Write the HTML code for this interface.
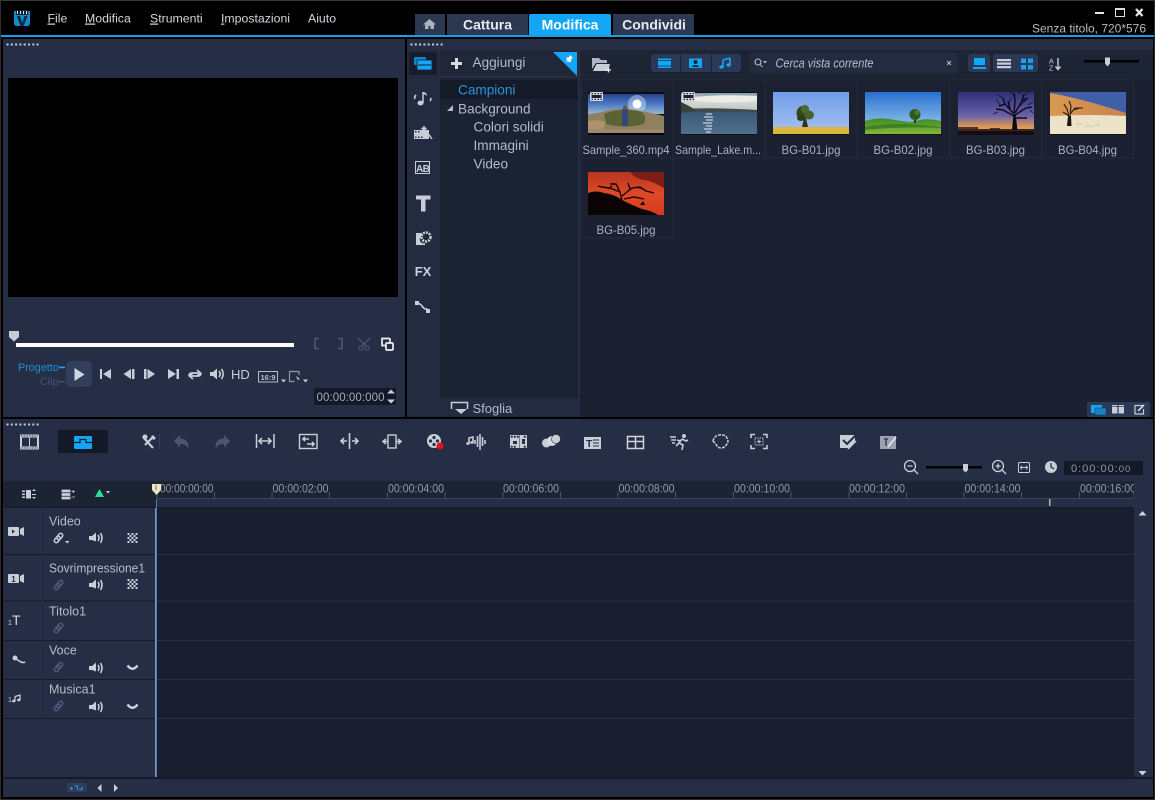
<!DOCTYPE html>
<html lang="it"><head><meta charset="utf-8"><title>VideoStudio</title>
<style>
html,body{margin:0;padding:0;background:#000;width:1155px;height:800px;overflow:hidden}
svg{display:block;filter:blur(.35px)}
text{font-family:"Liberation Sans",sans-serif}
.t{font-size:12px;fill:#aab1c0}
.m{font-size:12.3px;fill:#d2d6de}
.tr{font-size:13.6px;fill:#b3bac8}
.n{font-size:12.5px;fill:#b6bcc9}
.r{font-size:11.6px;fill:#8f97a8}
.tab{font-size:14px;font-weight:bold;fill:#e6e9ef}
.i{fill:#c8cdd8}
.s{fill:none;stroke:#c8cdd8;stroke-width:1.6}
</style></head><body>
<svg width="1155" height="800" viewBox="0 0 1155 800" xmlns="http://www.w3.org/2000/svg">
<defs>
<linearGradient id="sky1" x1="0" y1="0" x2="0" y2="1"><stop offset="0" stop-color="#27418f"/><stop offset=".55" stop-color="#4f7fc8"/><stop offset="1" stop-color="#9cb8d0"/></linearGradient>
<linearGradient id="sky2" x1="0" y1="0" x2="0" y2="1"><stop offset="0" stop-color="#7f9cb0"/><stop offset=".5" stop-color="#d8d8d0"/><stop offset="1" stop-color="#b8c4cc"/></linearGradient>
<linearGradient id="sea" x1="0" y1="0" x2="0" y2="1"><stop offset="0" stop-color="#3b5876"/><stop offset="1" stop-color="#4f7090"/></linearGradient>
<linearGradient id="sky3" x1="0" y1="0" x2="0" y2="1"><stop offset="0" stop-color="#6f9de8"/><stop offset="1" stop-color="#a9c4f0"/></linearGradient>
<linearGradient id="sky4" x1="0" y1="0" x2="0" y2="1"><stop offset="0" stop-color="#2a6fd0"/><stop offset="1" stop-color="#a4d6ee"/></linearGradient>
<linearGradient id="grass" x1="0" y1="0" x2="0" y2="1"><stop offset="0" stop-color="#3d8a28"/><stop offset="1" stop-color="#8cb83c"/></linearGradient>
<linearGradient id="sky5" x1="0" y1="0" x2="0" y2="1"><stop offset="0" stop-color="#2f2f7a"/><stop offset=".55" stop-color="#6a62a8"/><stop offset=".82" stop-color="#e09a50"/><stop offset="1" stop-color="#f0a040"/></linearGradient>
<linearGradient id="sand" x1="0" y1="0" x2="1" y2="0"><stop offset="0" stop-color="#d89a50"/><stop offset="1" stop-color="#c88250"/></linearGradient>
<linearGradient id="red" x1="0" y1="0" x2="0" y2="1"><stop offset="0" stop-color="#b83420"/><stop offset=".5" stop-color="#dd4a26"/><stop offset="1" stop-color="#d83a20"/></linearGradient>
<g id="vol"><path class="i" d="M-7-2h3l4-3.500v9L-4 2h-3z"/><path class="s" stroke-width="1.300" d="M2-3q2 3 0 6M4.500-5q3 5 0 10"/></g>
<g id="lnk" fill="none" stroke-width="1.500"><rect x="-5.500" y="-2" width="7" height="4" rx="2" transform="rotate(-50)"/><rect x="-1.500" y="-2" width="7" height="4" rx="2" transform="rotate(-50)"/></g>
<g id="chk"><path class="i" d="M-5-5h2v2h-2zM-1-5h2v2h-2zM3-5h2v2h-2zM-3-3h2v2h-2zM1-3h2v2h-2zM-5-1h2v2h-2zM-1-1h2v2h-2zM3-1h2v2h-2zM-3 1h2v2h-2zM1 1h2v2h-2zM-5 3h2v2h-2zM-1 3h2v2h-2zM3 3h2v2h-2z"/></g>
<g id="dn"><path fill="none" stroke="#d0d4dc" stroke-width="2.400" d="M-5-2.500Q0 4 5-2.500"/></g>
<g id="grip"><path fill="#c6cbd6" d="M0 0h2v2H0zM4.300 0h2v2h-2zM8.600 0h2v2h-2zM12.900 0h2v2h-2zM17.200 0h2v2h-2zM21.500 0h2v2h-2zM25.800 0h2v2h-2zM30.100 0h2v2h-2z"/></g>
<g id="fs"><rect width="13" height="9" rx="1" fill="#d6d9e0"/><path fill="#1a2130" d="M1.500 1h1.500v1.300H1.500zM4.500 1h1.500v1.300H4.500zM7.500 1h1.500v1.300H7.500zM10.500 1h1.500v1.300h-1.500zM1.500 6.700h1.500V8H1.500zM4.500 6.700h1.500V8H4.500zM7.500 6.700h1.500V8H7.500zM10.500 6.700h1.500V8h-1.500zM1.500 3h10v3h-10z"/></g>
</defs>

<!-- window frame -->
<rect width="1155" height="800" fill="#000"/>
<path d="M0 .5H1155" stroke="#3a3a3a"/>
<path d="M.5 0V800M1154.500 0V800M0 799.500H1155" stroke="#2e2e2e"/>
<rect x="1" y="35" width="1153" height="2" fill="#149fe6"/>

<!-- logo -->
<path d="M14 11h16v12q0 3-3 3H17q-3 0-3-3z" fill="#1689c8"/>
<path d="M17 16h3l2.200 7 2.300-7h3l-4 10h-3z" fill="#0b2a44"/>
<path d="M16 10h12v5H16z" fill="#0b2030"/>
<path fill="#e8edf2" d="M17 11h1v3h-1zM20 11h1v3h-1zM23 11h1v3h-1zM26 11h1v3h-1z"/>

<!-- menu -->
<text class="m" x="47.500" y="22.500"><tspan text-decoration="underline">F</tspan>ile</text>
<text class="m" x="85" y="22.500"><tspan text-decoration="underline">M</tspan>odifica</text>
<text class="m" x="150" y="22.500"><tspan text-decoration="underline">S</tspan>trumenti</text>
<text class="m" x="221" y="22.500"><tspan text-decoration="underline">I</tspan>mpostazioni</text>
<text class="m" x="308" y="22.500">Aiuto</text>

<!-- tabs -->
<rect x="415" y="14" width="30" height="21" fill="#2c3850"/>
<path d="M429.500 19l-6.500 5.500h2v4.500h3.500v-3h2v3h3.500v-4.500h2z" fill="#aab2c0"/>
<rect x="447" y="14" width="81" height="21" fill="#2c3850"/>
<text class="tab" x="487.500" y="29.500" text-anchor="middle">Cattura</text>
<path d="M529 16q0-2 2-2h78q2 0 2 2v19h-82z" fill="#13a6f5"/>
<text class="tab" x="570" y="29.500" text-anchor="middle" style="fill:#fff">Modifica</text>
<rect x="613" y="14" width="81" height="21" fill="#2c3850"/>
<text class="tab" x="654" y="29.500" text-anchor="middle">Condividi</text>

<!-- window buttons -->
<rect x="1095" y="12" width="9" height="2" fill="#e0e3e8"/>
<path d="M1115.500 8.500h9v8h-9z" fill="none" stroke="#d8dbe2"/><rect x="1115" y="8" width="10" height="2" fill="#d8dbe2"/>
<path d="M1136 9l6.500 7M1142.500 9l-6.500 7" stroke="#e8eaee" stroke-width="2.200"/>
<text x="1146" y="32.500" text-anchor="end" textLength="114" lengthAdjust="spacingAndGlyphs" style="font-size:12.200px;fill:#b4b9c4">Senza titolo, 720*576</text>

<!-- player panel -->
<rect x="3" y="39" width="402" height="378" fill="#252e44"/>
<use href="#grip" x="6.500" y="43.500"/>
<rect x="8" y="78" width="390" height="219" fill="#000"/>
<path d="M9 331h10v6l-5 4.500-5-4.500z" fill="#c6cbd6"/>
<rect x="16" y="343" width="278" height="4" fill="#fff"/>
<path d="M319 338.500h-4v10h4M338 338.500h4v10h-4" fill="none" stroke="#4e5a74" stroke-width="1.500"/>
<path d="M358 338l8 8M370 338l-8 8" stroke="#4e5a74" stroke-width="1.200"/><circle cx="361" cy="348" r="2" fill="none" stroke="#4e5a74"/><circle cx="367" cy="348" r="2" fill="none" stroke="#4e5a74"/>
<path d="M382 338.500h7q1 0 1 1v6h-8z" fill="none" stroke="#eef0f4" stroke-width="1.700"/><rect x="386" y="343" width="7" height="7" rx="1" fill="#252e44" stroke="#eef0f4" stroke-width="1.700"/>

<text x="18" y="371" style="font-size:10.800px;fill:#1e8fd8">Progetto</text><rect x="59" y="366.500" width="6" height="1.700" fill="#1ea0ea"/>
<text x="40" y="385" style="font-size:10.800px;fill:#46536e">Clip</text><rect x="59" y="381" width="6" height="1.500" fill="#46536e"/>
<rect x="66" y="361" width="26" height="26" rx="5" fill="#323e5c"/>
<path d="M74.500 368l10 6.500-10 6.500z" fill="#d0d5df"/>
<g class="i">
<path d="M100 369h2v10h-2zM111 369v10l-8-5z"/>
<path d="M132 369h2.500v10H132zM131 369v10l-7.500-5z"/>
<path d="M144 369h2.500v10H144zM147.500 369v10l7.500-5z"/>
<path d="M176.500 369h2.500v10h-2.500zM168 369v10l8-5z"/>
<path d="M210 372h3l4-3.500v11l-4-3.500h-3z"/>
</g>
<path class="s" d="M219 371q2.500 3 0 6M221.500 369q3.500 5 0 10" stroke-width="1.200"/>
<path d="M189 376q0-3 3-3h7M201 373q0 3-3 3h-7M197 370l3.500 3-3.500 3M193 373l-3.500 3 3.500 3" fill="none" stroke="#c8cdd8" stroke-width="1.700"/>
<text x="231" y="379" style="font-size:13px;fill:#c8cdd8">HD</text>
<rect x="258.500" y="371.500" width="19" height="10.500" fill="none" stroke="#b6bcc9"/><text x="268" y="380" text-anchor="middle" style="font-size:7.500px;fill:#b6bcc9;font-weight:bold">16:9</text>
<path d="M281 379.500h5l-2.500 3z" class="i"/>
<path d="M299 375v-3.500h-9.500v10h5" fill="none" stroke="#8f97a8" stroke-width="1.200"/><path d="M296 376l4 3-2 .5 .5 2z" class="i"/>
<path d="M303 379.500h5l-2.500 3z" class="i"/>
<rect x="314" y="388" width="82" height="17" fill="#131927"/>
<text x="316.500" y="401" textLength="68" lengthAdjust="spacing" style="font-size:11.500px;fill:#a2a9b8">00:00:00:000</text>
<path d="M391 389.500l4 4h-8zM391 403.500l-4-4h8z" class="i"/>

<!-- library panel -->
<rect x="407" y="39" width="746" height="378" fill="#252e44"/>
<use href="#grip" x="410.500" y="43.500"/>
<rect x="407" y="50" width="33" height="367" fill="#232b40"/>
<rect x="409" y="52" width="28" height="23" fill="#171d2b"/>
<rect x="440" y="78" width="138" height="339" fill="#1b2231"/>
<rect x="440" y="50" width="138" height="26" fill="#1f2739"/>
<rect x="580" y="50" width="573" height="367" fill="#1b2130"/>
<rect x="580" y="50" width="573" height="30" fill="#1d2434"/>
<!-- sidebar icons -->
<rect x="414" y="57" width="12" height="8" rx="1" fill="#1285c8"/><rect x="417" y="60" width="15" height="10" rx="1" fill="#13a6f5" stroke="#171d2b" stroke-width=".8"/><path d="M418 65h13" stroke="#171d2b"/>
<path d="M423 92v11" stroke="#b8bdc9" stroke-width="1.600"/><path d="M423 92q3 0 4 3l-1 .5q-1-1.500-3-1.500z" class="i"/><ellipse cx="420.500" cy="103" rx="3" ry="2.400" class="i"/>
<path d="M416 95q-2 2-1 4M430 101q1-1 1-3" class="s" stroke-width="1.200"/>
<path d="M414 130h15v9h-15z" class="i"/><path d="M415 131h1.500v1.500H415zM418 131h1.500v1.500H418zM415 136.500h1.500V138H415zM418 136.500h1.500V138H418zM421 136.500h1.500V138H421z" fill="#232b40"/><path d="M424 125l1 2.500 2.500.5-2 1.500.5 2.500-2-1.500-2 1.500.5-2.500-2-1.500 2.500-.5z" class="i"/><path d="M427 132l5 7" stroke="#c8cdd8" stroke-width="1.500"/>
<rect x="415" y="161" width="15" height="13" fill="#c8cdd8"/><rect x="416" y="162" width="13" height="11" fill="#232b40"/><text x="416" y="172" style="font-size:10px;font-weight:bold;fill:#c8cdd8;letter-spacing:-.6px">AB</text>
<path d="M416 195.500h14.500v4h-5v12h-4.500v-12h-5z" fill="#c8cdd8"/>
<path d="M416 233h6v3a3 3 0 0 0 3 7v2h-9z" class="i"/><circle cx="426" cy="237" r="4.500" fill="none" stroke="#c8cdd8" stroke-width="2.500" stroke-dasharray="2 1"/>
<text x="423" y="276" text-anchor="middle" style="font-size:13px;font-weight:bold;fill:#ccd1db">FX</text>
<path d="M416 303q4 0 6 3t4 3 3 2" class="s"/><rect x="415" y="301" width="4" height="4" class="i"/><rect x="426" y="309" width="4" height="4" class="i"/>

<!-- tree -->
<path d="M455 58h3v4h4v3h-4v4h-3v-4h-4v-3h4z" fill="#d8dbe2"/>
<text x="472.500" y="67" class="tr">Aggiungi</text>
<path d="M553 52h24v24z" fill="#13a6f5"/>
<path d="M570 55l3 3-2 1 .5 2-2 1.500-1.500-1.500-2.500 2 1.800-2.800-1.300-1.300 1.800-1.700 1 .3z" fill="#fff"/>
<rect x="440" y="80" width="137" height="19" fill="#151a28"/>
<text x="458" y="94.500" class="tr" style="fill:#2a94d8">Campioni</text>
<path d="M453 105v6h-6z" fill="#b3bac8"/>
<text x="458" y="113.500" class="tr">Background</text>
<text x="473.500" y="131.500" class="tr">Colori solidi</text>
<text x="473.500" y="150" class="tr">Immagini</text>
<text x="473.500" y="168.500" class="tr">Video</text>
<rect x="440" y="398" width="138" height="19" fill="#232b40"/>
<path d="M451.500 409v-6.500h16v6.500" fill="none" stroke="#c8cdd8" stroke-width="1.500"/><path d="M455 409h12l-6 5z" class="i"/>
<text x="472.500" y="413" class="tr" style="font-size:13px">Sfoglia</text>

<!-- library toolbar -->
<path d="M592 58h7l2 2h6v3h-11l-4 6z" fill="#aeb4c2"/><path d="M593 71l3.500-7H610l-2 7z" fill="#c8cdd8"/><path d="M606 70h5M608.500 67.500v5" stroke="#e8eaee" stroke-width="1.300"/>
<rect x="651" y="54" width="90" height="18" rx="4" fill="#2b3856"/>
<path d="M680.500 54v18M711.500 54v18" stroke="#1d2434"/>
<rect x="658" y="58.500" width="13" height="9.500" fill="#13a6f5"/><path d="M658 60.500h13M658 66h13" stroke="#0a4f80"/>
<rect x="689" y="58.500" width="13" height="9.500" fill="#13a6f5"/><circle cx="695.500" cy="62" r="2" fill="#123"/><path d="M691.500 67q4-4 8 0" fill="#123"/>
<path d="M723 60v6.500M730 58v6.500M723 60l7-2" stroke="#13a6f5" stroke-width="1.600" fill="none"/><ellipse cx="721.500" cy="67" rx="2.300" ry="1.800" fill="#13a6f5"/><ellipse cx="728.500" cy="65" rx="2.300" ry="1.800" fill="#13a6f5"/>
<rect x="750" y="53" width="208" height="20" rx="2" fill="#222b3f"/>
<circle cx="758" cy="62" r="3" fill="none" stroke="#b6bcc9" stroke-width="1.100"/><path d="M760 64.500l2.500 2.500" stroke="#b6bcc9"/><path d="M763 61h4l-2 2.500z" fill="#b6bcc9"/>
<text x="775.500" y="67.500" textLength="98" lengthAdjust="spacingAndGlyphs" style="font-size:12.500px;font-style:italic;fill:#b9bfcb">Cerca vista corrente</text>
<path d="M947 61l4 4M951 61l-4 4" stroke="#b0b6c4" stroke-width="1.100"/>
<rect x="968" y="54" width="22" height="18" rx="3" fill="#2b3856"/>
<rect x="974" y="58" width="11" height="7" fill="#13a6f5"/><rect x="973" y="67" width="13" height="2" fill="#13a6f5"/>
<rect x="993" y="54" width="45" height="18" rx="3" fill="#2b3856"/>
<path d="M997 59h14v2.300h-14zM997 62.500h14v2.300h-14zM997 66h14v2.300h-14z" fill="#c8cdd8"/>
<path d="M1021 58.500h5v4.500h-5zM1028 58.500h5v4.500h-5zM1021 65h5v4.500h-5zM1028 65h5v4.500h-5z" fill="#13a6f5"/>
<text x="1049" y="63.500" style="font-size:7px;fill:#c8cdd8">A</text><text x="1049" y="70.500" style="font-size:7px;fill:#c8cdd8">Z</text>
<path d="M1058 58v11M1055.500 66.500l2.500 3 2.500-3" fill="none" stroke="#c8cdd8" stroke-width="1.400"/>
<rect x="1084" y="60" width="55" height="2.500" fill="#000"/><path d="M1105 57.500h5v6l-2.500 3-2.500-3z" fill="#c8cdd8"/>

<!-- thumbnail grid -->
<g stroke="#232b3d" fill="none">
<path d="M581.500 80H1134M581.500 158H1134M581.500 238H673"/>
<path d="M581.500 80V238M673 80V238M765 80V158M857 80V158M949.500 80V158M1041.500 80V158M1133.500 80V158"/>
</g>
<!-- thumb 1 -->
<g>
<rect x="588" y="92" width="76" height="43" fill="#0d0d0d"/>
<rect x="588" y="94" width="76" height="20" fill="url(#sky1)"/>
<circle cx="637" cy="104" r="9" fill="#cfe6ff" opacity=".45"/><circle cx="637" cy="104" r="4.500" fill="#fff"/>
<path d="M588 114q10-1 18-3 14-4 30-1 12 2 28 6v17h-76z" fill="#8f8160"/>
<path d="M604 114q14-6 34-3 10 2 6 13-18 5-38 0z" fill="#5c6234"/>
<path d="M588 121q10-2 18 1l-5 11h-13z" fill="#b0916a"/>
<path d="M588 129h76v4h-76z" fill="#a08870"/>
<rect x="622" y="109" width="6" height="17" fill="#324a78"/><circle cx="625" cy="107.500" r="2" fill="#705040"/>
<rect x="588" y="133" width="76" height="2" fill="#050505"/>
<use href="#fs" x="590" y="92"/>
</g>
<!-- thumb 2 -->
<g>
<rect x="681" y="92" width="76" height="43" fill="#111"/>
<rect x="681" y="93" width="76" height="18" fill="url(#sky2)"/>
<path d="M695 97q25-3 62-1v5q-30 3-62 0z" fill="#ecebe4"/>
<path d="M681 109q30-2 76 1v2h-76z" fill="#404c4c"/>
<rect x="681" y="112" width="76" height="22" fill="url(#sea)"/>
<path d="M681 102l8 4 8 5 -16 2z" fill="#38403c"/>
<g stroke="#dfe8f0" stroke-width="1.200" opacity=".85"><path d="M706 114h6M704 117h9M706 120h7M703 123h9M706 126h6M704 129h8M706 132h5"/></g>
<use href="#fs" x="682" y="92"/>
</g>
<!-- thumb 3 -->
<g>
<rect x="773" y="92" width="76" height="43" fill="url(#sky3)"/>
<rect x="773" y="127" width="76" height="7" fill="#dcb63a"/>
<rect x="773" y="134" width="76" height="1" fill="#111"/>
<path d="M802 127q3 0 6 0l-2-9h-2z" fill="#3a3020"/>
<ellipse cx="803" cy="113" rx="6.500" ry="7" fill="#34481e"/><ellipse cx="809" cy="115" rx="5" ry="4.500" fill="#47622c"/><ellipse cx="805" cy="109" rx="4" ry="4" fill="#4c6a32"/><ellipse cx="801" cy="118" rx="4" ry="3" fill="#2c3e18"/>
</g>
<!-- thumb 4 -->
<g>
<rect x="865" y="92" width="76" height="43" fill="url(#sky4)"/>
<path d="M865 121q12-4 24-2 12 2 22 3 15-5 30-1v14h-76z" fill="url(#grass)"/>
<path d="M865 127q30-6 76 0v1q-40-2-76 2z" fill="#2f7420" opacity=".7"/>
<rect x="914" y="118" width="2" height="5" fill="#3a3018"/>
<circle cx="915" cy="114.500" r="5.500" fill="#2c5a1c"/><circle cx="917" cy="112.500" r="2.500" fill="#487a30"/>
<rect x="865" y="134" width="76" height="1" fill="#111"/>
</g>
<!-- thumb 5 -->
<g>
<rect x="958" y="92" width="76" height="43" fill="url(#sky5)"/>
<rect x="958" y="129" width="76" height="6" fill="#140e14"/>
<path d="M958 130h76" stroke="#6a3a30"/>
<path d="M1012 130l1.500-16 2 0 2 16z" fill="#0c0a14"/>
<path d="M1014 116l-11-6-7-1M1014 114l-9-10-2-6M1014 113l1-12-1-8M1015 113l7-12 2-7M1015 115l11-7 6-1M1015 118l12 0M1005 104l-6 2M1021 102l6-4M1010 109l-2-8" stroke="#100c18" stroke-width="1.500" fill="none"/>
<g stroke="#100c18" stroke-width="1" fill="none" opacity=".7"><path d="M1000 105l-4-6M1003 98l-5-3M1014 95l-4-3M1018 93l3-1M1024 95l5-3M1028 105l5-3M1030 110l3 3M998 112l-5 2M1008 106l3-8M1020 106l8-8"/></g>
<path d="M958 128h20M990 129h10" stroke="#1a1418" stroke-width="1.500"/>
</g>
<!-- thumb 6 -->
<g>
<rect x="1050" y="92" width="76" height="43" fill="#3f60a8"/>
<path d="M1050 93q30 5 76 20v4h-76z" fill="url(#sand)"/>
<path d="M1050 116q40-2 76 0v18h-76z" fill="#ece2c8"/>
<path d="M1067 126l1-10 3 0 .5 10z" fill="#20160e"/>
<path d="M1069 117l-2-8-3-5M1069 116l-6-4M1070 116l1-10-2-5M1070 114l5-6 8 0M1073 110l7-2" stroke="#2a1a0c" stroke-width="1.100" fill="none"/>
<path d="M1076 124h6M1085 126h8M1095 125h5" stroke="#c4bca8" stroke-width=".8"/>
<rect x="1050" y="134" width="76" height="1" fill="#111"/>
</g>
<!-- thumb 7 -->
<g>
<rect x="588" y="172" width="76" height="43" fill="url(#red)"/>
<path d="M630 172h34v16q-14-8-20-8-8-1-14-8z" fill="#7c1e16"/>
<path d="M588 193q8-3 16 0 10 1 20 8 10 5 18 8 10 2 16 6H588z" fill="#0a0405"/>
<path d="M622 200l-2-8-10-4-8-1M620 192l-4-8-6 0M622 196l10-8 8-1 6 4 8 2M630 189l-2-6M636 187l8 2M612 186l-4 3M602 187l-4-1M624 199l10-2 10 2" stroke="#170606" stroke-width="1.400" fill="none"/>
<path d="M640 205l3-4 2 4" fill="#0a0405"/>
</g>
<g class="t" text-anchor="middle">
<text x="626" y="154" textLength="87" lengthAdjust="spacingAndGlyphs">Sample_360.mp4</text>
<text x="718" y="154" textLength="86" lengthAdjust="spacingAndGlyphs">Sample_Lake.m...</text>
<text x="811" y="154" textLength="59" lengthAdjust="spacingAndGlyphs">BG-B01.jpg</text>
<text x="903" y="154" textLength="59" lengthAdjust="spacingAndGlyphs">BG-B02.jpg</text>
<text x="995.500" y="154" textLength="59" lengthAdjust="spacingAndGlyphs">BG-B03.jpg</text>
<text x="1087.500" y="154" textLength="59" lengthAdjust="spacingAndGlyphs">BG-B04.jpg</text>
<text x="626" y="234" textLength="59" lengthAdjust="spacingAndGlyphs">BG-B05.jpg</text>
</g>
<!-- library bottom-right -->
<rect x="1087" y="402" width="63" height="15" rx="2" fill="#2b3856"/>
<rect x="1091" y="405" width="11" height="8" fill="#13a6f5"/><rect x="1095" y="408" width="11" height="7" fill="#1285c8" stroke="#2b3856" stroke-width=".6"/>
<rect x="1112" y="405" width="12" height="8.500" fill="#c8cdd8"/><path d="M1118 405v8.500" stroke="#2b3856" stroke-width="1.200"/><path d="M1112 406.500h12" stroke="#2b3856" stroke-width=".7"/>
<path d="M1143 405.500h-8v8.500h8.500v-5" fill="none" stroke="#c8cdd8" stroke-width="1.200"/><path d="M1138 411l6-6" stroke="#e4e7ec" stroke-width="1.500"/>

<!-- timeline panel -->
<rect x="3" y="419" width="1150" height="378" fill="#252e44"/>
<use href="#grip" x="6.500" y="423.500"/>
<!-- toolbar -->
<g>
<rect x="20" y="434.500" width="19" height="15" fill="#c8cdd8"/><rect x="22" y="437.500" width="7" height="9" fill="#252e44"/><rect x="30" y="437.500" width="7" height="9" fill="#252e44"/><path d="M21 436h17M21 448h17" stroke="#252e44" stroke-dasharray="1.500 1.200"/>
<rect x="58" y="430" width="50" height="23" fill="#131927"/>
<rect x="74" y="436" width="18" height="13" rx="1" fill="#13a6f5"/><path d="M74 442.500h6v-3h6v3h6" stroke="#131927" stroke-width="1.300" fill="none"/>
<path d="M143 437l10 11M154 436l-9 9" stroke="#c8cdd8" stroke-width="2.200"/><circle cx="145" cy="437" r="2.500" class="i"/><path d="M152 435l4 3-2 2-3-2z" class="i"/><path d="M159.500 434v15" stroke="#33405c"/>
<path d="M174 441l6-6v3.500q9 0 8.500 10-2.500-5-8.500-4.500v3.500z" fill="#485672"/>
<path d="M230 441l-6-6v3.500q-9 0-8.500 10 2.500-5 8.500-4.500v3.500z" fill="#485672"/>
<path d="M256.500 434v14M274 434v14" stroke="#c8cdd8" stroke-width="1.500"/><path d="M259 441h12M262 438l-3 3 3 3M268 438l3 3-3 3" class="s" stroke-width="1.400"/>
<rect x="299.500" y="434.500" width="17.500" height="14" fill="none" stroke="#c8cdd8" stroke-width="1.400"/><path d="M303 439h6M305 437l-2 2 2 2M307 444h7M312 442l2 2-2 2" class="s" stroke-width="1"/>
<path d="M349.500 433v16M347 441h-6M344 438l-3 3 3 3M352 441h6M355 438l3 3-3 3" class="s" stroke-width="1.500"/>
<rect x="388" y="435" width="8" height="13" fill="none" stroke="#c8cdd8" stroke-width="1.400"/><path d="M388 441.500h-5M386 439l-3 2.500 3 2.500M396 441.500h5M398 439l3 2.500-3 2.500" class="s" stroke-width="1.300"/>
<circle cx="434" cy="441" r="7" class="i"/><circle cx="434" cy="437.500" r="1.600" fill="#252e44"/><circle cx="430.500" cy="441" r="1.600" fill="#252e44"/><circle cx="437.500" cy="441" r="1.600" fill="#252e44"/><circle cx="434" cy="444.500" r="1.600" fill="#252e44"/><circle cx="440" cy="446" r="3.500" fill="#e0101c"/>
<path d="M469 443v-5l4-1v5M475 440v4M477.500 436v11M480 434v16M482.500 437v9M485 440v4" class="s" stroke-width="1.300"/><ellipse cx="468" cy="443.500" rx="1.800" ry="1.400" class="i"/><ellipse cx="472" cy="442.500" rx="1.800" ry="1.400" class="i"/>
<rect x="510" y="435" width="17" height="13" class="i"/><path d="M511 436h1.500v1.500H511zM514 436h1.500v1.500H514zM517 436h1.500v1.500H517zM524 436h1.500v1.500H524zM511 446h1.500v1.500H511zM514 446h1.500v1.500H514zM524 446h1.500v1.500H524zM519.500 435v13" fill="#252e44" stroke="#252e44" stroke-width=".5"/><path d="M513 441h4v3h-4zM522 439h3v5h-3z" fill="#252e44"/>
<circle cx="546.500" cy="443" r="4.500" class="i"/><circle cx="552" cy="441" r="5" fill="#d8dbe2"/><circle cx="556" cy="439" r="4.500" class="i" stroke="#252e44" stroke-width=".6"/>
<rect x="584" y="437" width="17" height="12" class="i"/><text x="586" y="447" style="font-size:10.500px;font-weight:bold;fill:#252e44">T</text><path d="M593 440h6M593 443h6M593 446h6" stroke="#252e44"/>
<rect x="627.500" y="436.500" width="16" height="12" fill="none" stroke="#d0d4dc" stroke-width="1.500"/><path d="M627.500 441.500h16M635.500 436.500v12" stroke="#d0d4dc" stroke-width="1.500"/>
<circle cx="684" cy="436" r="2" class="i"/><path d="M682 439l-3 4 4 2-1 5M680 441l-3-1M682 439l4 2 2-1M679 443l-3 3" class="s" stroke-width="1.700"/><path d="M670 437h6M671 440h5M672 443h3" class="s" stroke-width="1"/>
<path d="M713 441q1-5 6-6 6-1 8 3 2 3 0 6-2 3-5 4-4 0-5-2t-4-5z" fill="none" stroke="#c8cdd8" stroke-width="1.500" stroke-dasharray="3 1"/>
<path d="M751 438v-3.500h4M763 434.500h4v3.500M767 445v3.500h-4M755 448.500h-4V445" class="s"/><rect x="755" y="438" width="8" height="7" fill="none" stroke="#c8cdd8" stroke-dasharray="1.300 1"/><path d="M759 439.500v4M757 441.500h4" stroke="#c8cdd8"/>
<path d="M840 435h15v6l-5 7h-10z" class="i"/><path d="M843 440l4 4 9-9" fill="none" stroke="#252e44" stroke-width="2"/><path d="M848 449l8-8" stroke="#c8cdd8" stroke-width="1.500"/>
<rect x="880" y="436" width="16" height="13" fill="#9aa2b2"/><path d="M884 439h4M886 439v7" stroke="#252e44" stroke-width="1.200"/><path d="M888 447l8-10" stroke="#e4e7ec" stroke-width="1.700"/>
</g>
<!-- zoom row -->
<circle cx="910" cy="466" r="5.500" fill="none" stroke="#c8cdd8" stroke-width="1.300"/><path d="M907.500 466h5M914 470l4 4" stroke="#c8cdd8" stroke-width="1.300"/>
<rect x="926" y="466" width="56" height="2.500" fill="#000"/><path d="M963 464h5v6l-2.500 2.500-2.500-2.500z" fill="#c8cdd8"/>
<circle cx="998" cy="466" r="5.500" fill="none" stroke="#c8cdd8" stroke-width="1.300"/><path d="M995.500 466h5M998 463.500v5M1002 470l4 4" stroke="#c8cdd8" stroke-width="1.300"/>
<rect x="1018.500" y="462.500" width="11" height="10" rx="1" fill="none" stroke="#c8cdd8"/><path d="M1021 467.500h6M1022 465.500l-1.500 2 1.500 2M1026 465.500l1.500 2-1.500 2" fill="none" stroke="#c8cdd8" stroke-width=".9"/>
<circle cx="1051" cy="467" r="6" class="i"/><path d="M1051 463v4l3 2" stroke="#252e44" stroke-width="1.300" fill="none"/>
<rect x="1064" y="461" width="79" height="14" fill="#131927"/>
<text x="1071" y="472" style="font-size:11px;fill:#8f97a8;letter-spacing:1px">0:00:00:<tspan style="font-size:9.500px">00</tspan></text>

<!-- ruler -->
<rect x="3" y="481" width="1150" height="26" fill="#1c2434"/>
<rect x="157" y="499" width="977" height="8" fill="#252e44"/>
<rect x="157" y="498" width="977" height="1" fill="#3a4560"/>
<g stroke="#4a5570">
<path d="M157 492v6M214.500 492v6M272 492v6M329.500 492v6M387.500 492v6M445 492v6M503 492v6M560.500 492v6M618 492v6M675.500 492v6M733.500 492v6M791 492v6M849 492v6M906.500 492v6M964 492v6M1021.500 492v6M1079.500 492v6M1134 492v6"/>
</g>
<g class="r">
<text x="160" y="492.500" textLength="53.500" lengthAdjust="spacingAndGlyphs">00:00:00:00</text>
<text x="272.500" y="492.500" textLength="56" lengthAdjust="spacingAndGlyphs">00:00:02:00</text>
<text x="388" y="492.500" textLength="56" lengthAdjust="spacingAndGlyphs">00:00:04:00</text>
<text x="503" y="492.500" textLength="56" lengthAdjust="spacingAndGlyphs">00:00:06:00</text>
<text x="618.500" y="492.500" textLength="56" lengthAdjust="spacingAndGlyphs">00:00:08:00</text>
<text x="734" y="492.500" textLength="56" lengthAdjust="spacingAndGlyphs">00:00:10:00</text>
<text x="849" y="492.500" textLength="56" lengthAdjust="spacingAndGlyphs">00:00:12:00</text>
<text x="964.500" y="492.500" textLength="56" lengthAdjust="spacingAndGlyphs">00:00:14:00</text>
<text x="1080" y="492.500" textLength="56" lengthAdjust="spacingAndGlyphs">00:00:16:00</text>
</g>
<rect x="1134" y="481" width="19" height="26" fill="#252e44"/>
<rect x="1049" y="499" width="1.500" height="7" fill="#aab1c0"/>
<path d="M152 484h9v6l-4.500 5-4.500-5z" fill="#ece4c8"/><path d="M155 485h2v5h-2z" fill="#b4ac90"/>
<path d="M22 490.500h3v1.500h-3zM22 493.500h3v1.500h-3zM22 496.500h3v1.500h-3zM32 491l2-2 2 2zM32 494h4v1h-4zM32 497l2 2 2-2z" class="i"/><rect x="26" y="490" width="5" height="8.500" class="i"/>
<path d="M62 490h8v2h-8zM62 493.500h8v2h-8zM62 497h8v2h-8zM71.500 491.500h3.500M73.200 490v3M71.500 497h3.500" fill="#c8cdd8" stroke="#c8cdd8" stroke-width=".8"/>
<path d="M99.500 489l4.500 8h-9z" fill="#27e38c"/><path d="M106 491h4l-2 2.500z" class="i"/>

<!-- tracks -->
<rect x="3" y="507" width="153" height="270" fill="#252e44"/>
<rect x="157" y="507" width="977" height="270" fill="#181e2d"/>
<rect x="4" y="507" width="152" height="1" fill="#151a26"/>
<g stroke="#151b28">
<path d="M3 554.500h153M3 601h153M3 640.500h153M3 679.500h153M3 718.500h153"/>
</g>
<g stroke="#262f44"><path d="M157 554.500h977M157 601h977M157 640.500h977M157 679.500h977M157 718.500h977"/></g>
<path d="M42.500 508v210.500" stroke="#212a3e"/>
<rect x="155" y="508" width="1" height="269" fill="#8a93a8"/>
<rect x="156" y="499" width="1" height="278" fill="#4a7ad0"/>
<rect x="157" y="507" width="977" height="1" fill="#141926"/>

<text class="n" x="49" y="525.500">Video</text>
<text class="n" x="49" y="572.500" textLength="96" lengthAdjust="spacingAndGlyphs">Sovrimpressione1</text>
<text class="n" x="49" y="615.500">Titolo1</text>
<text class="n" x="49" y="654.500">Voce</text>
<text class="n" x="49" y="693.500">Musica1</text>

<!-- track left icons -->
<rect x="8" y="527" width="11" height="9" rx="1" class="i"/><path d="M20 529l4-2v9l-4-2z" class="i"/><path d="M12 529.500l3 2-3 2z" fill="#252e44"/>
<rect x="8" y="574" width="11" height="9" rx="1" class="i"/><path d="M20 576l4-2v9l-4-2z" class="i"/><text x="13.500" y="582" text-anchor="middle" style="font-size:8px;font-weight:bold;fill:#252e44">1</text>
<text x="8" y="625" style="font-size:7px;fill:#c8cdd8">1</text><text x="12" y="625" style="font-size:14px;fill:#d0d4dc">T</text>
<circle cx="15" cy="658" r="2.500" class="i"/><path d="M16 659l5 3q2 1 4 0" class="s" stroke-width="1.300"/>
<text x="8" y="702" style="font-size:7px;fill:#c8cdd8">1</text><path d="M15 696.500l5-1.500v5M15 696.500v5" fill="none" stroke="#d0d4dc" stroke-width="1.200"/><ellipse cx="13.800" cy="701" rx="1.700" ry="1.400" class="i"/><ellipse cx="18.800" cy="700" rx="1.700" ry="1.400" class="i"/>

<!-- track controls -->
<use href="#lnk" x="58.500" y="538" stroke="#c8cdd8"/><path d="M65 541h4.500l-2.250 2.500z" class="i"/>
<use href="#vol" x="96" y="538"/><use href="#chk" x="132.500" y="538"/>
<use href="#lnk" x="58.500" y="585" stroke="#4e5c7a"/><use href="#vol" x="96" y="585"/><use href="#chk" x="132.500" y="584"/>
<use href="#lnk" x="58.500" y="628" stroke="#4e5c7a"/>
<use href="#lnk" x="58.500" y="667" stroke="#4e5c7a"/><use href="#vol" x="96" y="668"/><use href="#dn" x="132.500" y="668"/>
<use href="#lnk" x="58.500" y="706" stroke="#4e5c7a"/><use href="#vol" x="96" y="707"/><use href="#dn" x="132.500" y="707"/>

<!-- scrollbar arrows -->
<path d="M1138.500 515.500l4-4.500 4 4.500z" fill="#d0d4dc"/>
<path d="M1138.500 771h8l-4 4.500z" fill="#d0d4dc"/>

<!-- bottom strip -->
<rect x="3" y="777" width="1150" height="2" fill="#151a26"/>
<rect x="67" y="783" width="20" height="9" rx="1" fill="#2f3d5c"/>
<path d="M70 788.500h3M71.500 787v3M74.500 786h3v3.500M79 789.500h3v-3" fill="none" stroke="#2a9be2"/>
<path d="M101.500 784v8l-4-4z" fill="#c8cdd8"/>
<path d="M114 784v8l4-4z" fill="#c8cdd8"/>
</svg>
</body></html>
